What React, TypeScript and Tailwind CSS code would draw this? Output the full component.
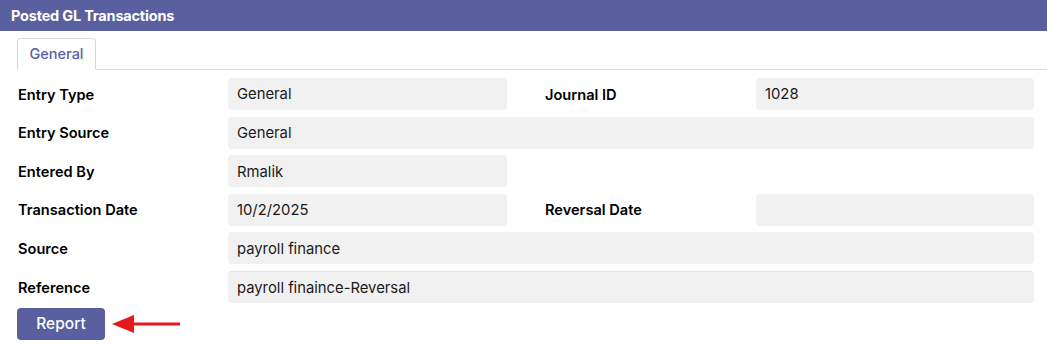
const fields: { label: string; value: string; right?: { label: string; value: string }; full?: boolean; area?: boolean }[] = [
  { label: 'Entry Type', value: 'General', right: { label: 'Journal ID', value: '1028' } },
  { label: 'Entry Source', value: 'General', full: true },
  { label: 'Entered By', value: 'Rmalik' },
  { label: 'Transaction Date', value: '10/2/2025', right: { label: 'Reversal Date', value: '' } },
  { label: 'Source', value: 'payroll finance', full: true },
  { label: 'Reference', value: 'payroll finaince-Reversal', full: true, area: true },
];

function Box({ value, area }: { value: string; area?: boolean }) {
  return (
    <div
      className={`h-[32px] rounded-[4px] bg-[#f1f1f1] px-[9px] pt-[1px] flex items-center text-[14.8px] text-[#1a1a1a] ${
        area ? 'border-t border-[#e2e2e2] items-start pt-[5px]' : ''
      }`}
    >
      {value}
    </div>
  );
}

export default function App() {
  return (
    <div className="w-[1047px] h-[346px] bg-white font-['Inter','Noto_Sans',sans-serif] overflow-hidden">
      <div className="h-[31px] bg-[#5a5f9f] px-[11px] flex items-center text-white text-[14.5px] font-bold tracking-[-0.2px]">
        Posted GL Transactions
      </div>
      <div className="pl-[17px] pt-[7px]">
        <div className="flex border-b border-[#d9d9d9]">
          <div className="w-[79px] h-[32px] -mb-px bg-white border border-b-white border-[#d9d9d9] rounded-t-[4px] flex items-center justify-center text-[14.5px] font-medium text-[#5a5f9f]">
            General
          </div>
        </div>
      </div>
      <div className="pl-[18px] pt-[8px] grid grid-cols-[210px_279px_249px_278px] gap-y-[6.6px]">
        {fields.map((f) => (
          <div key={f.label} className="contents">
            <div className="h-[32px] pt-[3px] flex items-center text-[14.6px] font-semibold text-black">{f.label}</div>
            {f.full ? (
              <div className="col-span-3">
                <Box value={f.value} area={f.area} />
              </div>
            ) : (
              <>
                <Box value={f.value} />
                {f.right ? (
                  <>
                    <div className="h-[32px] pt-[3px] pl-[38px] flex items-center text-[14.6px] font-semibold text-black">
                      {f.right.label}
                    </div>
                    <Box value={f.right.value} />
                  </>
                ) : (
                  <div className="col-span-2" />
                )}
              </>
            )}
          </div>
        ))}
      </div>
      <div className="pl-[17px] pt-[5px] flex items-center">
        <button className="w-[88px] h-[32px] rounded-[4px] bg-[#5a5f9f] text-white text-[15.5px] font-medium">
          Report
        </button>
        <svg width="70" height="24" viewBox="0 0 70 24" className="ml-[7px]">
          <line x1="18" y1="12" x2="68" y2="12" stroke="#e3191c" strokeWidth="3" />
          <polygon points="0,12 22,3 22,21" fill="#e3191c" />
        </svg>
      </div>
    </div>
  );
}
